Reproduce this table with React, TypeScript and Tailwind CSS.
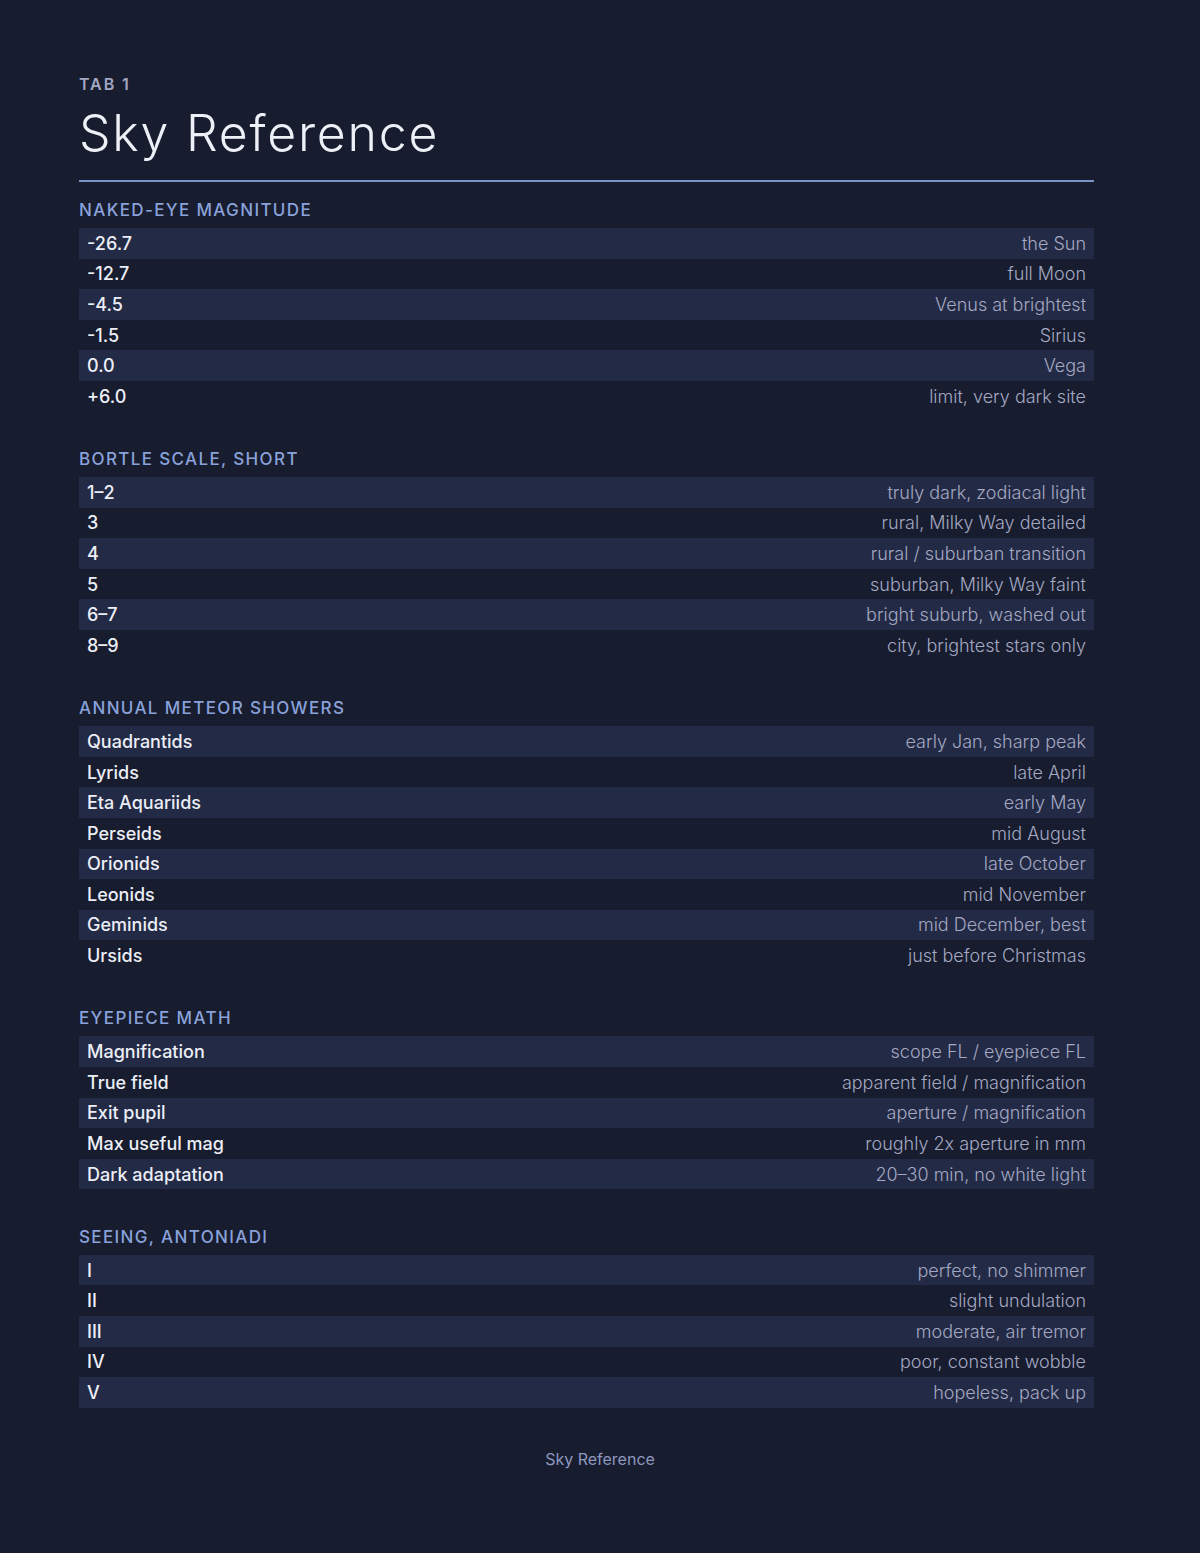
import React from "react";

type Row = [string, string];
const sections: { title: string; rows: Row[] }[] = [
  {
    title: "Naked-eye magnitude",
    rows: [
      ["-26.7", "the Sun"],
      ["-12.7", "full Moon"],
      ["-4.5", "Venus at brightest"],
      ["-1.5", "Sirius"],
      ["0.0", "Vega"],
      ["+6.0", "limit, very dark site"],
    ],
  },
  {
    title: "Bortle scale, short",
    rows: [
      ["1–2", "truly dark, zodiacal light"],
      ["3", "rural, Milky Way detailed"],
      ["4", "rural / suburban transition"],
      ["5", "suburban, Milky Way faint"],
      ["6–7", "bright suburb, washed out"],
      ["8–9", "city, brightest stars only"],
    ],
  },
  {
    title: "Annual meteor showers",
    rows: [
      ["Quadrantids", "early Jan, sharp peak"],
      ["Lyrids", "late April"],
      ["Eta Aquariids", "early May"],
      ["Perseids", "mid August"],
      ["Orionids", "late October"],
      ["Leonids", "mid November"],
      ["Geminids", "mid December, best"],
      ["Ursids", "just before Christmas"],
    ],
  },
  {
    title: "Eyepiece math",
    rows: [
      ["Magnification", "scope FL / eyepiece FL"],
      ["True field", "apparent field / magnification"],
      ["Exit pupil", "aperture / magnification"],
      ["Max useful mag", "roughly 2x aperture in mm"],
      ["Dark adaptation", "20–30 min, no white light"],
    ],
  },
  {
    title: "Seeing, Antoniadi",
    rows: [
      ["I", "perfect, no shimmer"],
      ["II", "slight undulation"],
      ["III", "moderate, air tremor"],
      ["IV", "poor, constant wobble"],
      ["V", "hopeless, pack up"],
    ],
  },
];

export default function App() {
  return (
    <div
      className="min-h-[1553px] w-full bg-[#171c2e] pl-[79px] pr-[106px] pt-[74px] pb-[80px]"
      style={{ fontFamily: "Inter, 'Noto Sans', sans-serif" }}
    >
      <div className="text-[16px] leading-[20px] font-semibold tracking-[0.12em] text-[#a2a7c2]">TAB 1</div>
      <h1 className="mt-[10px] text-[50px] leading-[58px] font-light tracking-[0.035em] text-[#eef0f7]">
        Sky Reference
      </h1>
      <div className="mt-[18px] h-[2px] bg-[#7b93cb]" />
      <div className="mt-[17px] flex flex-col gap-[36.5px]">
        {sections.map((s) => (
          <section key={s.title}>
            <h2 className="text-[17px] leading-[22px] font-medium uppercase tracking-[0.08em] text-[#8aa2da]">
              {s.title}
            </h2>
            <div className="mt-[7px] flex flex-col">
              {s.rows.map(([k, v], i) => (
                <div
                  key={k}
                  className={`flex h-[30.6px] items-center justify-between px-[8px] text-[18px] ${
                    i % 2 === 0 ? "bg-[#232a45]" : "bg-transparent"
                  }`}
                >
                  <span className="font-medium text-[#eceef6]">{k}</span>
                  <span className="font-light text-[#a4a8c2]">{v}</span>
                </div>
              ))}
            </div>
          </section>
        ))}
      </div>
      <div className="mt-[39px] -mr-[106px] -ml-[79px] text-center text-[16px] text-[#8e98bf]">Sky Reference</div>
    </div>
  );
}
